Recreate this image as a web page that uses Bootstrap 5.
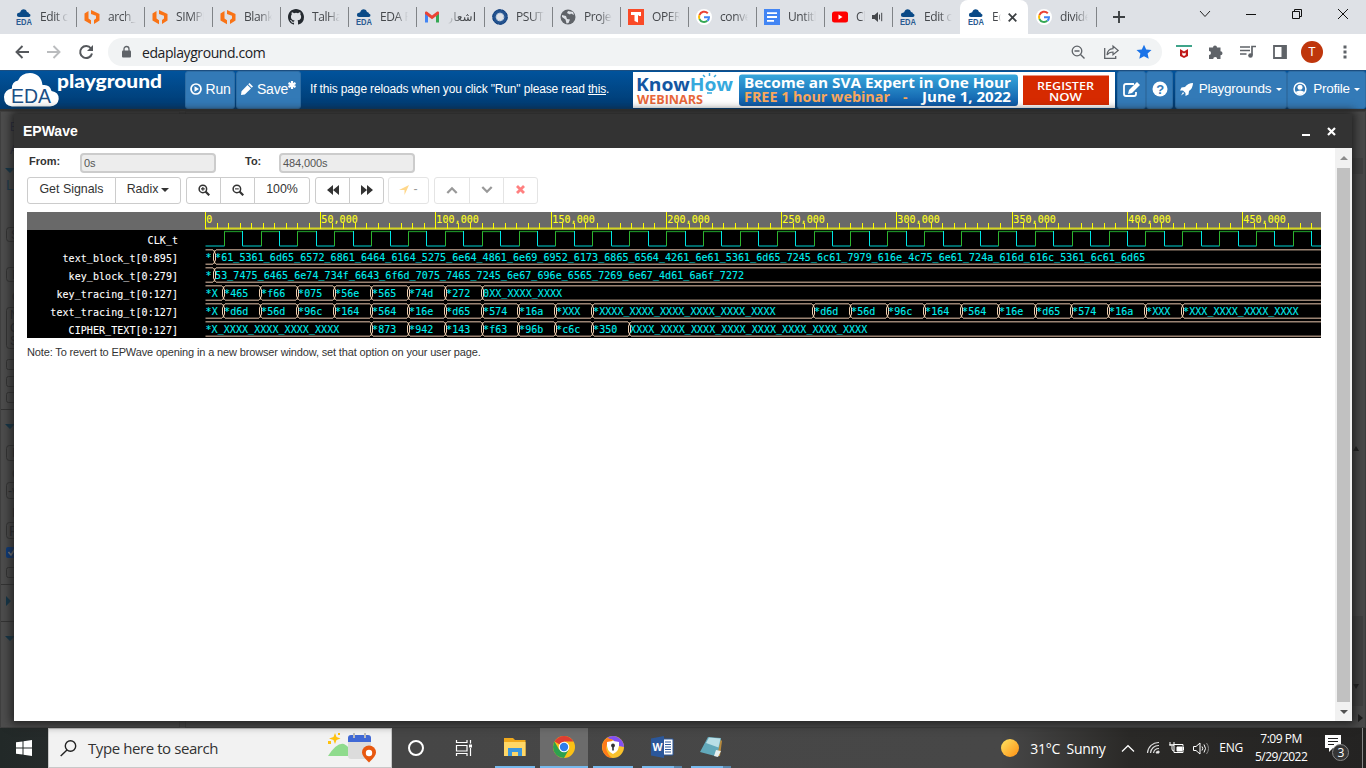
<!DOCTYPE html>
<html lang="en">
<head>
<meta charset="utf-8">
<title>Edit code - EDA Playground</title>
<link href="https://cdn.jsdelivr.net/npm/bootstrap@5.3.0/dist/css/bootstrap.min.css" rel="stylesheet">
<style>
html,body{height:100%;overflow:hidden}
body{font-family:"Liberation Sans",Arial,sans-serif;font-size:14px;background:#4a4a4a;color:#333}
svg{display:block;flex:none;overflow:visible}
.seg{font-family:"Open Sans","Noto Sans",sans-serif}
/* browser chrome */
.tabstrip{height:34px;background:#dee1e6;padding-left:8px}
.btab{width:68px;height:34px;padding:0 8px;font-size:12px;letter-spacing:-.4px;color:#45484c;position:relative;flex:none}
.btab .ttl{margin-left:8px;width:29px;overflow:hidden;white-space:nowrap;-webkit-mask-image:linear-gradient(90deg,#000 55%,transparent)}
.btab.sep::after{content:"";position:absolute;right:-1px;top:7px;height:20px;width:1px;background:#808387}
.btab.on{background:#fff;border-radius:8px 8px 0 0}
.btab .ttl.short{width:9px}
.addr{height:36px;background:#fff}
.omni{width:1054px;height:28px;background:#f1f3f4;border-radius:14px;padding:0 11px 0 14px;margin-left:15px}
.avatar{width:22px;height:22px;background:#bf360c;color:#fff;font-size:12px}
/* site header */
.sitebar{height:39px;background:linear-gradient(#01539c,#003a70);border-top:1px solid #1c4e80}
.sitebar .btn{background:#337ab7;border:1px solid #2e6da4;color:#fff;border-radius:3px;height:38px;padding:0 0 2px;font-size:14px;line-height:1;letter-spacing:-.25px}
.sitebar .note{font-size:12px;color:#fff;letter-spacing:-.15px}
.caret{display:inline-block;border:4px solid transparent;border-top-color:currentColor;border-bottom:0}
.caret.sm3{border-width:3px 3px 0}
/* dimmed page */
.stage{height:619px;background:#474747;border-top:2px solid #353433;position:relative}
.side{width:180px;height:617px;background:#4d4d4d;border:1px solid #404040}
.main{height:617px;background:#494949;border:1px solid #3d3d3d;margin-left:5px}
/* viewer window */
.viewer{position:absolute;left:14px;top:3px;width:1338px;height:607px;background:#fff;box-shadow:0 0 9px 3px #222}
.viewer .cap{height:34px;background:#333;color:#fff;font-weight:bold;font-size:14px;padding:0 16px 0 9px}
.viewer .content{width:1321px;padding:5px 0 0 13px}
.scrollcol{width:17px;height:573px;background:#f1f1f1}
.thumb{width:13px;background:#c1c1c1;height:534px}
.fld{font-size:11px;font-weight:bold;height:19px;line-height:17px}
.ro{width:136px;height:20px;border:2px solid #ccc;background:#ededed;border-radius:4px;font-size:11px;line-height:17px;padding-left:2px;color:#555;letter-spacing:-.1px}
.tools{margin-top:4px}
.tools .btn{height:27px;border:1px solid #ccc;background:#fff;color:#333;font-size:12.400px;padding:0 0 2px;border-radius:3px;line-height:1}
.tools .btn-group>.btn:not(:last-child){border-top-right-radius:0;border-bottom-right-radius:0}
.tools .btn-group>.btn:not(:first-child){border-top-left-radius:0;border-bottom-left-radius:0}
.tools .off{border-color:#e4e4e4;color:#999}
.wavebox{margin-top:8px;width:1294px;height:126px;background:#000}
.foot-note{font-size:11px;letter-spacing:-.145px;margin-top:6px;line-height:16px}
/* taskbar */
.taskbar{height:40px;background:linear-gradient(90deg,#222928 0,#252a2a 48px,#464646 392px,#474747 1000px,#2a2927 1130px,#242322)}
.search{width:344px;height:40px;background:#f2f2f2;border:1px solid #c8c8c8;font-size:15px;color:#333;letter-spacing:-.42px}
.task{width:40px;height:40px;border-bottom:2px solid #76b9ed}
.task.cur{width:48px;background:#6c6c6c}
.tray{color:#fff;white-space:nowrap}
</style>
</head>
<body>
<svg width="0" height="0" class="position-absolute">
 <defs>
  <symbol id="eda" viewBox="0 0 16 16"><path d="M3 8a2 2 0 0 1 0-4.200Q3.500 3.200 4.200 3.200Q5 .2 7.800 .2Q10.600 .3 11 2.900Q13 3 12.900 4.500Q15 5 14.400 7Q14 8 12.500 8Z" fill="#0a4a87"/><text x="0" y="15.800" font-family="Liberation Sans" font-weight="bold" font-size="8.500" textLength="16" lengthAdjust="spacingAndGlyphs" letter-spacing="0" fill="#2a5b91">EDA</text></symbol>
  <symbol id="lt" viewBox="0 0 16 16"><path d="M.5 4.500L4.500 2v7.500L7 11.300V15.300L.5 11.500ZM7 1l8.500 4v6.500L10 15v-4l2-1.500V6.700L7 5Z" fill="#f97316"/></symbol>
  <symbol id="gg" viewBox="0 0 16 16"><circle cx="8" cy="8" r="8" fill="#fff"/><path d="M11.800 4.200A5 5 0 0 0 3.500 6" fill="none" stroke="#ea4335" stroke-width="2"/><path d="M3.500 6a5 5 0 0 0 0 4.200" fill="none" stroke="#fbbc05" stroke-width="2"/><path d="M3.500 10.100A5 5 0 0 0 11.300 11.800" fill="none" stroke="#34a853" stroke-width="2"/><path d="M8 8.200h5a5 5 0 0 1-1.600 3.600" fill="none" stroke="#4285f4" stroke-width="2"/></symbol>
  <symbol id="mag" viewBox="0 0 16 16"><circle cx="6.500" cy="6.500" r="5" fill="none" stroke="currentColor" stroke-width="2"/><path d="M10 10l5 5" stroke="currentColor" stroke-width="3"/></symbol>
 </defs>
</svg>

<div class="tabstrip d-flex align-items-center seg">
 <div class="btab sep d-flex align-items-center"><svg width="16" height="16"><use href="#eda"/></svg><span class="ttl">Edit co</span></div>
 <div class="btab sep d-flex align-items-center"><svg width="16" height="16"><use href="#lt"/></svg><span class="ttl">arch_p</span></div>
 <div class="btab sep d-flex align-items-center"><svg width="16" height="16"><use href="#lt"/></svg><span class="ttl">SIMPL</span></div>
 <div class="btab sep d-flex align-items-center"><svg width="16" height="16"><use href="#lt"/></svg><span class="ttl">Blank</span></div>
 <div class="btab sep d-flex align-items-center"><svg width="16" height="16" viewBox="0 0 16 16"><path fill="#24292f" d="M8 0C3.580 0 0 3.580 0 8c0 3.540 2.290 6.530 5.470 7.590.4.070.55-.17.55-.38v-1.490c-2.010.37-2.530-.49-2.690-.94-.09-.23-.48-.94-.82-1.130-.28-.15-.68-.52-.01-.53.63-.01 1.080.58 1.230.82.72 1.210 1.870.87 2.330.66.07-.52.28-.87.51-1.070-1.780-.2-3.640-.89-3.640-3.950 0-.87.31-1.590.82-2.150-.08-.2-.36-1.020.08-2.120 0 0 .67-.21 2.200.82a7.600 7.600 0 0 1 4 0c1.530-1.040 2.200-.82 2.200-.82.44 1.100.16 1.920.08 2.120.51.56.82 1.270.82 2.150 0 3.070-1.870 3.750-3.650 3.950.29.25.54.73.54 1.480v2.200c0 .21.15.46.55.38A8 8 0 0 0 16 8c0-4.420-3.580-8-8-8"/></svg><span class="ttl">TalHas</span></div>
 <div class="btab sep d-flex align-items-center"><svg width="16" height="16"><use href="#eda"/></svg><span class="ttl">EDA P</span></div>
 <div class="btab sep d-flex align-items-center"><svg width="16" height="16" viewBox="0 0 16 16"><path d="M1 4v9.500h3V7Z" fill="#4285f4"/><path d="M15 4v9.500h-3V7Z" fill="#34a853"/><path d="M1 3.500Q1 2 2.800 2.500L8 6.500l5.200-4Q15 2 15 3.500V5L8 10.200 1 5Z" fill="#ea4335"/></svg><span class="ttl" dir="rtl" style="-webkit-mask-image:linear-gradient(270deg,#000 55%,transparent);font-family:'DejaVu Sans'">اشعار</span></div>
 <div class="btab sep d-flex align-items-center"><svg width="16" height="16" viewBox="0 0 16 16"><circle cx="8" cy="8" r="6" fill="none" stroke="#24538f" stroke-width="3.500"/><circle cx="8" cy="8" r="7.200" fill="none" stroke="#123f7b" stroke-dasharray="3 1.500"/><circle cx="8" cy="8" r="3.800" fill="none" stroke="#86a9cf" stroke-dasharray="1 1"/></svg><span class="ttl">PSUT</span></div>
 <div class="btab sep d-flex align-items-center"><svg width="16" height="16" viewBox="0 0 16 16"><circle cx="8" cy="8" r="7.500" fill="#5f6368"/><path d="M2 6l4 1 1 3 3 .5-1.500 3.500-2 .5-1-4L2 8ZM8 2l-1 2 3 1.500 1-1 3 1.500-1-3Z" fill="#dee1e6"/></svg><span class="ttl">Projec</span></div>
 <div class="btab sep d-flex align-items-center"><svg width="16" height="16" viewBox="0 0 16 16"><path d="M0 0h16v16H0Z" fill="#fa4a27"/><path d="M3 3h10v4h-2v-1l-1 .7V13.500L6.500 12V6H3Z" fill="#fff"/></svg><span class="ttl">OPERA</span></div>
 <div class="btab sep d-flex align-items-center"><svg width="16" height="16"><use href="#gg"/></svg><span class="ttl">conver</span></div>
 <div class="btab sep d-flex align-items-center"><svg width="16" height="16" viewBox="0 0 16 16"><path d="M0 0h16v16H0Z" fill="#4285f4"/><path d="M3 4.200h10M3 8h10M3 11.800h7" stroke="#fff" stroke-width="1.800"/></svg><span class="ttl">Untitle</span></div>
 <div class="btab sep d-flex align-items-center"><svg width="16" height="16" viewBox="0 0 16 16"><rect y="2.500" width="16" height="11" rx="2.500" fill="#f00"/><path d="M6.500 5.500l4 2.500-4 2.500Z" fill="#fff"/></svg><span class="ttl short">Ch</span><svg style="margin-left:7px" width="12" height="12" viewBox="0 0 12 12"><path d="M0 4h2.500L6 1v10L2.500 8H0Z" fill="#45484c"/><path d="M7.500 3.500v5M9.700 1.800v8.400" stroke="#45484c"/></svg></div>
 <div class="btab d-flex align-items-center"><svg width="16" height="16"><use href="#eda"/></svg><span class="ttl">Edit co</span></div>
 <div class="btab on d-flex align-items-center"><svg width="16" height="16"><use href="#eda"/></svg><span class="ttl short">Ed</span><svg style="margin-left:7px" width="9" height="9"><path d="M.7 .7l7.600 7.600M8.300 .7L.7 8.300" stroke="#3c4043" stroke-width="1.800"/></svg></div>
 <div class="btab sep d-flex align-items-center"><svg width="16" height="16"><use href="#gg"/></svg><span class="ttl">divide</span></div>
 <svg style="margin-left:17px" width="12" height="12"><path d="M6 0v12M0 6h12" stroke="#3c4043" stroke-width="1.900"/></svg>
 <svg style="margin-left:75px;margin-top:-6px" width="10" height="6"><path d="M0 0l5 5.500L10 0" fill="none" stroke="#222"/></svg>
 <svg style="margin-left:36px;margin-top:-5px" width="10" height="1"><path d="M0 .5h10" stroke="#111"/></svg>
 <svg style="margin-left:36px;margin-top:-6px" width="10" height="10"><path d="M.5 2.500h7v7h-7ZM2.500 2.500v-2h7v7h-2" fill="none" stroke="#111"/></svg>
 <svg style="margin-left:36px;margin-top:-6px" width="10" height="10"><path d="M0 0l10 10M10 0L0 10" stroke="#111"/></svg>
</div>

<div class="addr d-flex align-items-center">
 <svg style="margin-left:15px" width="14" height="14"><path d="M14 7H1.500M7.500 1L1.500 7l6 6" fill="none" stroke="#55585c" stroke-width="1.900"/></svg>
 <svg style="margin-left:18px" width="14" height="14"><path d="M0 7h12.500M6.500 1l6 6-6 6" fill="none" stroke="#babcbe" stroke-width="1.900"/></svg>
 <svg style="margin-left:18px" width="14" height="14"><path d="M12 3.500A6 6 0 1 0 13 8.500" fill="none" stroke="#55585c" stroke-width="2"/><path d="M14 0v6H8Z" fill="#55585c"/></svg>
 <div class="omni d-flex align-items-center">
  <svg width="9" height="12"><rect y="4.500" width="9" height="7" rx="1" fill="#5f6368"/><path d="M2 5V3a2.500 2.500 0 0 1 5 0v2" fill="none" stroke="#5f6368" stroke-width="1.300"/></svg>
  <span class="seg" style="font-size:14px;margin-left:11px;color:#202124;letter-spacing:-.42px">edaplayground.com</span>
  <svg class="ms-auto" width="15" height="15" viewBox="0 0 15 15"><circle cx="6" cy="6" r="4.800" fill="none" stroke="#5f6368" stroke-width="1.300"/><path d="M9.500 9.500l4 4M3.500 6h5" stroke="#5f6368" stroke-width="1.400"/></svg>
  <svg style="margin-left:18px" width="15" height="14" viewBox="0 0 15 14"><path d="M.7 3v10.300h11V11" fill="none" stroke="#5f6368" stroke-width="1.300"/><path d="M3 10Q3.500 4 9 3.700V1l5.200 4.500L9 9.800V7Q5 7 3 10Z" fill="none" stroke="#5f6368" stroke-width="1.200"/></svg>
  <svg style="margin-left:17px;margin-right:-1px" width="16" height="16" viewBox="0 0 16 16"><path d="M8 .7l2.200 4.800 5.300.6-3.900 3.500 1.100 5.200L8 12.200l-4.700 2.600 1.100-5.200L.5 6.100l5.300-.6Z" fill="#1a73e8"/></svg>
 </div>
 <svg style="margin-left:14px;margin-top:-2px" width="16" height="13" viewBox="0 0 16 13"><path d="M0 0h16v2H0Z" fill="#3fa48a"/><path d="M4 4v7l4 2 4-2V4L8 6.500ZM6.300 7.500L8 8.500l1.700-1V10L8 11l-1.700-1Z" fill="#c01818" fill-rule="evenodd"/></svg>
 <svg style="margin-left:16px" width="16" height="16" viewBox="0 0 16 16"><path d="M1 3.500h4a2 2 0 1 1 4 0h3.500v3.700a2 2 0 1 1 0 4V15H9.200a2 2 0 1 0-4 0H1V11a2 2 0 1 0 0-4Z" fill="#5f6368"/></svg>
 <svg style="margin-left:16px" width="16" height="14" viewBox="0 0 16 14"><path d="M0 2h10M0 5.500h10M0 9h6.500M12 10V1.500h4" stroke="#5f6368" stroke-width="1.700" fill="none"/><circle cx="10.500" cy="10.500" r="2.300" fill="#5f6368"/></svg>
 <svg style="margin-left:17px" width="14" height="14"><path d="M1 1h12v12H1Z" fill="#fff" stroke="#5f6368" stroke-width="1.800"/><path d="M8.500 1H13v12H8.500Z" fill="#5f6368"/></svg>
 <div class="avatar rounded-circle d-flex align-items-center justify-content-center" style="margin-left:14px">T</div>
 <svg style="margin-left:20px" width="4" height="14"><path d="M.5 .5h3v3h-3ZM.5 5.500h3v3h-3ZM.5 10.500h3v3h-3Z" fill="#5f6368"/></svg>
</div>

<nav class="sitebar d-flex align-items-start">
 <svg width="185" height="38" viewBox="0 0 185 38"><path d="M12 35.500Q4 34.500 4 26Q4.500 18.500 12 17.500Q11.500 11 18 9.500Q21 2 30 2Q41 2.500 42.500 14Q50 13 51.500 20Q59 21 58.700 28Q58 35 50 35.500Z" fill="#fff"/><text x="11" y="32" font-size="21" textLength="40" lengthAdjust="spacingAndGlyphs" fill="#1b4f86">EDA</text><text x="57" y="16.500" font-family="Lato" font-weight="900" font-size="19" textLength="105" lengthAdjust="spacingAndGlyphs" fill="#fff">playground</text></svg>
 <button class="btn d-flex align-items-center justify-content-center gap-1" style="width:50px"><svg width="12" height="12" viewBox="0 0 12 12"><circle cx="6" cy="6" r="5" fill="none" stroke="#fff" stroke-width="1.700"/><path d="M4.500 3.300L9 6 4.500 8.700Z" fill="#fff"/></svg>Run</button>
 <button class="btn d-flex align-items-center justify-content-center" style="width:65px;margin-left:1px"><svg width="12" height="12" viewBox="0 0 12 12" style="margin-right:4px"><path d="M8.500 0L12 3.500 10.700 4.800 7.200 1.300ZM6.500 2L10 5.500 3.800 11.500 0 12 .5 8.200Z" fill="#fff"/></svg>Save<svg width="8" height="8" style="margin-top:-8px"><path d="M4 0v8M.5 2l7 4M.5 6l7-4" stroke="#fff" stroke-width="2.200"/></svg></button>
 <span class="note align-self-center" style="width:322px;margin-left:9px;margin-top:-2px">If this page reloads when you click "Run" please read <u>this</u>.</span>
 <svg width="482" height="36" viewBox="0 0 482 36" style="margin:1px 2px 0 1px" font-family="Open Sans" font-weight="bold">
  <defs><linearGradient id="ban" x2="0" y2="1"><stop stop-color="#37a7dc"/><stop offset="1" stop-color="#0c58a6"/></linearGradient></defs>
  <path d="M0 0h482v36H0Z" fill="#fff"/>
  <text x="3" y="18.500" font-size="18" textLength="97" lengthAdjust="spacingAndGlyphs" fill="#1457a2">Know<tspan fill="#36a9dd">How</tspan></text><path d="M76.500 1v3M70 3l2 2M83 3l-2 2M74 21h5" stroke="#36a9dd" stroke-width="1.500"/>
  <text x="4" y="31.500" font-size="12" textLength="66" lengthAdjust="spacingAndGlyphs" fill="#e8673a">WEBINARS</text>
  <rect x="106" y="2.500" width="279" height="31.500" rx="3" fill="url(#ban)"/>
  <text x="111" y="15.500" font-size="15" textLength="267" lengthAdjust="spacingAndGlyphs" fill="#fff">Become an SVA Expert in One Hour</text>
  <text x="111" y="29.800" font-size="14" textLength="146" lengthAdjust="spacingAndGlyphs" fill="#f9a75c">FREE 1 hour webinar</text><text x="270" y="29.500" font-size="14" fill="#f9a75c">-</text>
  <text x="289" y="29.800" font-size="14" textLength="89" lengthAdjust="spacingAndGlyphs" fill="#fff">June 1, 2022</text>
  <path d="M390 3.500h86v29.500h-86Z" fill="#d62a00"/>
  <text x="404" y="17.500" font-size="11.500" textLength="57" lengthAdjust="spacingAndGlyphs" fill="#fff" font-weight="600">REGISTER</text><text x="416" y="28.500" font-size="11.500" textLength="33" lengthAdjust="spacingAndGlyphs" fill="#fff" font-weight="600">NOW</text>
 </svg>
 <button class="btn d-flex align-items-center justify-content-center" style="width:29px"><svg width="17" height="15" viewBox="0 0 17 15"><path d="M11 2H3Q1 2 1 4v8q0 2 2 2h8q2 0 2-2v-2" fill="none" stroke="#fff" stroke-width="1.800"/><path d="M14 0l3 3-8 8-4 1 1-4Z" fill="#fff"/></svg></button>
 <button class="btn d-flex align-items-center justify-content-center" style="width:27px"><svg width="16" height="16"><circle cx="8" cy="8" r="7.500" fill="#fff"/><text x="4.200" y="13" font-weight="bold" font-size="13" fill="#337ab7">?</text></svg></button>
 <button class="btn d-flex align-items-center justify-content-center" style="width:112px;margin-left:2px"><svg width="13" height="13" viewBox="0 0 13 13" style="margin-right:6px"><path d="M13 0Q8 0 5 4L1.500 4.500 0 7.500 3 7.500 5.500 10V13L8.500 11.500 9 8Q13 5 13 0ZM3 9l1.200 1.200L1 12.500Z" fill="#fff"/></svg><span style="font-size:13.500px;padding-right:1px">Playgrounds</span><i class="caret sm3 ms-1"></i></button>
 <button class="btn d-flex align-items-center justify-content-center" style="width:79px"><svg width="14" height="14" style="margin-right:6px"><circle cx="7" cy="7" r="5.900" fill="none" stroke="#fff" stroke-width="1.500"/><circle cx="7" cy="5.300" r="2.500" fill="#fff"/><path d="M2.500 10q4.500-3 9 0-4.500 5-9 0Z" fill="#fff"/></svg><span style="font-size:13.500px">Profile</span><i class="caret sm3 ms-1"></i></button>
</nav>

<section class="stage d-flex">
 <div class="side">
  <svg width="60" height="610" viewBox="1 112 60 610" font-size="12" fill="#25282d">
   <text x="10" y="131" fill="#262a42">E</text><text x="10" y="154" fill="#262a42">A</text><path d="M5 168h10l-5 5ZM5 424h10l-5 5ZM5 636h10l-5 5ZM6 596v10l5-5Z" fill="#12364a"/><text x="6" y="190" font-size="14" fill="#1b3b50">L</text>
   <path d="M1 409.500h13M1 584.500h13M1 621.500h13" stroke="#333"/>
   <g fill="none" stroke="#333"><rect x="6.500" y="227.500" width="30" height="14" rx="3"/><rect x="6.500" y="267.500" width="30" height="14" rx="3"/><rect x="6.500" y="307.500" width="30" height="41" rx="3"/><rect x="6.500" y="359.500" width="10" height="10" rx="2"/><rect x="6.500" y="376.500" width="10" height="10" rx="2"/><rect x="6.500" y="392.500" width="10" height="10" rx="2"/><rect x="6.500" y="445.500" width="30" height="15" rx="3"/><rect x="6.500" y="482.500" width="30" height="16" rx="3"/><rect x="6.500" y="522.500" width="30" height="16" rx="3"/><rect x="6.500" y="567.500" width="10" height="10" rx="2"/></g>
   <text x="11" y="239">S</text><text x="12" y="279">N</text><text x="12" y="301">O</text><text x="10" y="319">N</text><text x="10" y="332">C</text><text x="10" y="345">S</text><text x="12" y="457">I</text><text x="12" y="478">C</text><text x="8" y="495">-v</text><text x="12" y="517">I</text><text x="9" y="536" font-size="14">R</text>
   <rect x="6" y="547" width="11" height="11" rx="2" fill="#0a3b80"/><path d="M8.500 552l2.500 3 4-6" stroke="#888" stroke-width="1.500" fill="none"/>
  </svg>
 </div>
 <div class="main flex-grow-1 d-flex flex-column justify-content-end align-items-end"><svg width="20" height="616"><path d="M5 47h13v16H5ZM5 505h13v90H5Z" fill="#414141"/><path d="M8 340h6l-3-5ZM8 573h6l-3 5ZM13 603v8l5-4Z" fill="#1b1b1b"/></svg></div>

 <div class="viewer">
  <div class="cap d-flex align-items-center justify-content-between"><span>EPWave</span>
   <span class="d-flex align-items-center"><svg width="8" height="9"><path d="M0 8h8" stroke="#fff" stroke-width="2"/></svg><svg style="margin-left:17px" width="9" height="9"><path d="M1 1l7 7M8 1L1 8" stroke="#fff" stroke-width="2.200"/></svg></span></div>
  <div class="d-flex">
   <div class="content">
    <div class="d-flex">
     <span class="fld" style="width:53px;padding-left:2px">From:</span><div class="ro">0s</div>
     <span class="fld" style="width:63px;padding-left:29px">To:</span><div class="ro">484,000s</div>
    </div>
    <div class="tools d-flex">
     <div class="btn-group"><button class="btn" style="width:89px">Get Signals</button><button class="btn" style="width:66px">Radix<i class="caret align-middle" style="margin-left:3px"></i></button></div>
     <div class="btn-group" style="margin-left:5px"><button class="btn d-flex align-items-center justify-content-center" style="width:35px"><svg width="12" height="12" viewBox="0 0 16 16"><use href="#mag"/><path d="M6.500 4v5M4 6.500h5" stroke="#333" stroke-width="1.500"/></svg></button><button class="btn d-flex align-items-center justify-content-center" style="width:35px"><svg width="12" height="12" viewBox="0 0 16 16"><use href="#mag"/><path d="M4 6.500h5" stroke="#333" stroke-width="1.500"/></svg></button><button class="btn" style="width:56px">100%</button></div>
     <div class="btn-group" style="margin-left:5px"><button class="btn d-flex align-items-center justify-content-center" style="width:35px"><svg width="12" height="10"><path d="M6 0v10L0 5ZM12 0v10L6 5Z" fill="#333"/></svg></button><button class="btn d-flex align-items-center justify-content-center" style="width:35px"><svg width="12" height="10"><path d="M0 0v10l6-5ZM6 0v10l6-5Z" fill="#333"/></svg></button></div>
     <button class="btn off d-flex align-items-center justify-content-center gap-1" style="width:41px;margin-left:4px"><svg width="10" height="10"><path d="M10 0L5.500 10V5H0Z" fill="#ffd78a"/></svg>-</button>
     <div class="btn-group" style="margin-left:5px"><button class="btn off d-flex align-items-center justify-content-center" style="width:36px"><svg width="12" height="8"><path d="M1.300 7L6 2.300 10.700 7" fill="none" stroke="#999" stroke-width="2.300"/></svg></button><button class="btn off d-flex align-items-center justify-content-center" style="width:35px"><svg width="12" height="8"><path d="M1.300 1L6 5.700 10.700 1" fill="none" stroke="#999" stroke-width="2.300"/></svg></button><button class="btn off d-flex align-items-center justify-content-center" style="width:35px"><svg width="9" height="9"><path d="M1 1l7 7M8 1L1 8" stroke="#ff8080" stroke-width="2.800"/></svg></button></div>
    </div>
    <div class="wavebox"><svg id="wave" width="1294" height="126" viewBox="27 212 1294 126" style="overflow:hidden" font-family="DejaVu Sans Mono, monospace" font-size="10"></svg></div>
    <div class="foot-note">Note: To revert to EPWave opening in a new browser window, set that option on your user page.</div>
   </div>
   <div class="scrollcol d-flex flex-column align-items-center justify-content-between py-1"><svg width="8" height="5" style="margin-top:3px"><path d="M0 5l4-4 4 4Z" fill="#8b8b8b"/></svg><div class="thumb"></div><svg width="8" height="5" style="margin-bottom:2px"><path d="M0 0l4 4 4-4Z" fill="#505050"/></svg></div>
  </div>
 </div>
</section>

<footer class="taskbar d-flex align-items-center seg">
 <svg width="48" height="16"><path d="M16 2.300l6.500-.9v6.100H16ZM23.500 1.200L32 0v7.500h-8.500ZM16 8.500h6.500v6.100L16 13.700ZM23.500 8.500H32V16l-8.500-1.200Z" fill="#fff"/></svg>
 <div class="search d-flex align-items-center">
  <svg width="17" height="17" style="margin-left:11px"><circle cx="10.500" cy="6" r="5.200" fill="none" stroke="#222" stroke-width="1.400"/><path d="M7 10L.7 16" stroke="#222" stroke-width="1.400"/></svg>
  <span style="margin-left:11px">Type here to search</span>
  <svg width="50" height="30" viewBox="0 0 50 30" class="ms-auto" style="margin-right:14px"><path d="M1 23Q10 9 17 11Q24 14 24 23Z" fill="#8fdb8d"/><path d="M8 0l1.500 4 4 1.500-4 1.500L8 11 6.500 7 2 5.500 6.500 4ZM1 8h3v3H1ZM11 0h2v2h-2Z" fill="#ffc20e"/><rect x="21" y="3" width="23" height="23" rx="3" fill="#dcdcdc"/><path d="M21 9V5q0-3 3-3h17q3 0 3 3v4Z" fill="#3f68d5"/><path d="M27 0v5M38 0v5" stroke="#bbb" stroke-width="2"/><path d="M42 29.500Q35 23 35 19.500a7 7 0 0 1 14 0Q49 23 42 29.500Z" fill="#e8580f"/><circle cx="42" cy="20" r="3.200" fill="#fff"/></svg>
 </div>
 <svg width="16" height="16" style="margin-left:16px"><circle cx="8" cy="8" r="7" fill="none" stroke="#fff" stroke-width="2"/></svg>
 <svg width="17" height="16" style="margin-left:32px"><path d="M.5 0v2.500h10.500V0M.5 16v-2.500h10.500V16M.5 5.500h10.500v5.500H.5ZM14.500 0v3.500M14.500 8v8" fill="none" stroke="#fff" stroke-width="1.200"/><path d="M13 4.500h3v3h-3Z" fill="#fff"/></svg>
 <div class="task d-flex align-items-center justify-content-center" style="margin-left:22px"><svg width="22" height="18"><path d="M0 0h9l2 2h10.500v16H0Z" fill="#f0a91c"/><path d="M0 4h21.500v14H0Z" fill="#ffd766"/><path d="M4 18v-8h14v8h-4v-4H8v4Z" fill="#3c97dd"/></svg></div>
 <div class="task cur d-flex align-items-center justify-content-center" style="margin-left:5px"><svg width="22" height="22" viewBox="0 0 22 22"><circle cx="11" cy="11" r="11" fill="#fbc116"/><path d="M11 11L1.500 5.500A11 11 0 0 1 20.500 5.500H11Z" fill="#df3d32"/><path d="M1.500 5.500A11 11 0 0 0 11 22l4.700-8.300L11 11 6 13.500Z" fill="#2da04e"/><circle cx="11" cy="11" r="5.300" fill="#fff"/><circle cx="11" cy="11" r="4.200" fill="#2f7de9"/></svg></div>
 <div class="task d-flex align-items-center justify-content-center" style="margin-left:5px"><svg width="22" height="22" viewBox="0 0 22 22"><circle cx="11" cy="11" r="11" fill="#f9c22c"/><path d="M5 2A11 11 0 0 1 22 11L17 10 11 4Z" fill="#8250f4"/><path d="M5 2A11 11 0 0 0 10 22Q2 15 5 8L11 4Z" fill="#ff7a1a"/><path d="M5 6q6-1 6-1.500 0 .5 6 1.500 1 9-6 12Q4 15 5 6Z" fill="#fff"/><circle cx="11" cy="9.500" r="1.900" fill="#333"/><path d="M10.200 10h1.600v4.500h-1.600Z" fill="#333"/></svg></div>
 <div class="task d-flex align-items-center justify-content-center" style="margin-left:9px;border-image:linear-gradient(90deg,#76b9ed 31px,#5886ab 31px) 1"><svg width="22" height="22" viewBox="0 0 22 22"><path d="M10 3h12v16H10Z" fill="#fff" stroke="#2b579a"/><path d="M14 6h6M14 8.500h6M14 11h6M14 13.500h6M14 16h6" stroke="#2b579a"/><path d="M0 2.500L13 0v22L0 19.500Z" fill="#2b579a"/><text x="1.500" y="15" font-size="11" font-weight="bold" fill="#fff" textLength="10" lengthAdjust="spacingAndGlyphs">W</text></svg></div>
 <div class="task d-flex align-items-center justify-content-center" style="margin-left:9px;border-image:linear-gradient(90deg,#76b9ed 31px,#5886ab 31px) 1"><svg width="22" height="22" viewBox="0 0 22 22"><path d="M20 3l2 2-2 15h-4Z" fill="#b88a3d"/><path d="M8 1l13 1-4 18.500L0 16Z" fill="#62a9bb"/><path d="M9 1.500l11.500 1-2 9L6 7Z" fill="#b9dfe7"/><path d="M16 14l5 1-3 6-4-1Z" fill="#e7eeee"/></svg></div>
 <div class="tray d-flex align-items-center ms-auto">
  <svg width="18" height="18"><defs><linearGradient id="sun" x2="1" y2="1"><stop stop-color="#ffe564"/><stop offset="1" stop-color="#ff8f12"/></linearGradient></defs><circle cx="9" cy="9" r="9" fill="url(#sun)"/></svg>
  <span style="font-size:14px;margin-left:11px;letter-spacing:-.3px;width:92px">31°C&nbsp; Sunny</span>
  <svg width="12" height="7"><path d="M0 6.500L6 .7l6 5.800" fill="none" stroke="#fff" stroke-width="1.200"/></svg>
  <svg width="13" height="12" style="margin-left:13px" fill="none" stroke="#ddd"><path d="M.5 11A11 11 0 0 1 12 .5M3.500 11A8 8 0 0 1 12 3.500M6.500 11A5.500 5.500 0 0 1 12 6.500" stroke-width="1.200"/><path d="M9 11q0-2 3-2v2Z" fill="#fff"/></svg>
  <svg width="16" height="12" style="margin-left:9px" fill="none" stroke="#fff"><path d="M5 2.500h9v8H5ZM14.500 5v3M1 0v3h4V0M0 3h5M3 4v3q0 2 2 2"/><path d="M8 5h5v4H8Z" fill="#fff"/></svg>
  <svg width="16" height="13" style="margin-left:8px" fill="none" stroke="#fff"><path d="M.5 4.500h2.500L7 1v11L3 8.500H.5Z"/><path d="M9 4.500q1.500 2 0 4M11 2.500q3 4 0 8"/><path d="M13.500 1q4 5.500 0 11" stroke="#888"/></svg>
  <span style="font-size:12px;margin-left:10px;letter-spacing:-.25px">ENG</span>
  <div class="text-center" style="font-size:12px;line-height:18px;letter-spacing:-.5px;margin-left:12px;width:52px">7:09 PM<br>5/29/2022</div>
  <svg width="25" height="26" style="margin-left:18px;margin-right:18px" viewBox="0 0 25 26"><path d="M0 0h16v13H8l-4 4v-4H0Z" fill="#fff"/><path d="M3 3.500h10M3 6.500h10M3 9.500h6" stroke="#222"/><circle cx="15.500" cy="17.500" r="8" fill="#363636" stroke="#888"/><text x="12.500" y="22" font-size="12" fill="#fff">3</text></svg>
 </div>
 <div style="width:1px;height:40px;background:#888;margin-right:3px;margin-left:-6px"></div>
</footer>

<script src="https://cdn.jsdelivr.net/npm/bootstrap@5.3.0/dist/js/bootstrap.bundle.min.js"></script>
<script>
const X0 = 205.5, END = 1321, PX = 115.22 / 50000, CH = 6.08;
const snap = t => Math.round(X0 + t * PX - .5) + .5;
let out = '<path d="M27 212h1294v18H27Z" fill="#696969"/>';
const line = (d, c, w) => out += `<path d="${d}" stroke="${c}" stroke-width="${w || 1}" fill="none"/>`;
// underscores are lifted so that they stay clear of the bus outline
const lift = s => s.replace(/_([^_]*)/g, '<tspan dy="-1.5">_</tspan><tspan dy="1.5">$1</tspan>');
const label = (x, y, s, c, a) => out += `<text x="${x}" y="${y}" fill="${c}" stroke="${c}" stroke-width=".1" textLength="${(s.length * CH).toFixed(1)}" text-anchor="${a || 'start'}">${lift(s)}</text>`;

// time ruler
line('M205 228.500H1321', '#d4d420', 2);
for (let t = 0; t < 484000; t += 5000) {
  const x = snap(t), big = t % 50000 === 0;
  line(`M${x} ${big ? 212 : 223}V229`, '#ffff00');
  if (big) label(x + .8, 223, t.toLocaleString('en-US'), '#ffff20');
}
// clock
let x = 205.5;
for (let t = 8000, up = true; x < END; t += 8000, up = !up) {
  const n = snap(t + 100);
  line(`M${x} ${up ? 246 : 231.500}H${n}`, up ? '#00a3a3' : '#1b8b25', 1.3);
  if (n < END) line(`M${n} 231V246`, up ? '#2fb52f' : '#00e5e5');
  x = n;
}
label(178, 244, 'CLK_t', '#fff', 'end');

// buses: [start time, shown value]
const run = (from, list) => list.split(' ').map((v, i) => [from + 16000 * i, v]);
const buses = [
  ['text_block_t[0:895]', [[0, '*'], [4000, '*61_5361_6d65_6572_6861_6464_6164_5275_6e64_4861_6e69_6952_6173_6865_6564_4261_6e61_5361_6d65_7245_6c61_7979_616e_4c75_6e61_724a_616d_616c_5361_6c61_6d65']]],
  ['key_block_t[0:279]', [[0, '*'], [4000, '53_7475_6465_6e74_734f_6643_6f6d_7075_7465_7245_6e67_696e_6565_7269_6e67_4d61_6a6f_7272']]],
  ['key_tracing_t[0:127]', [[0, '*X'], ...run(8000, '*465 *f66 *075 *56e *565 *74d *272 0XX_XXXX_XXXX')]],
  ['text_tracing_t[0:127]', [[0, '*X'], ...run(8000, '*d6d *56d *96c *164 *564 *16e *d65 *574 *16a *XXX *XXXX_XXXX_XXXX_XXXX_XXXX_XXXX'), ...run(264000, '*d6d *56d *96c *164 *564 *16e *d65 *574 *16a *XXX *XXX_XXXX_XXXX_XXXX')]],
  ['CIPHER_TEXT[0:127]', [[0, '*X_XXXX_XXXX_XXXX_XXXX'], ...run(72000, '*873 *942 *143 *f63 *96b *c6c *350 XXXX_XXXX_XXXX_XXXX_XXXX_XXXX_XXXX_XXXX')]]
];
buses.forEach(([name, segs], i) => {
  const y = 249 + 18 * i;
  label(178, y + 13, name, '#fff', 'end');
  line(`M205.500 ${y + .7}H1321M205.500 ${y + 15.300}H1321`, '#9a8373', 1.4);
  segs.forEach(([t, v], k) => {
    const sx = snap(t);
    if (k) {
      line(`M${sx} ${y}V${y + 16}`, '#000', 3);
      line(`M${sx - 1} ${y + 1}l2 4v6l-2 4M${sx + 1} ${y + 1}l-2 4v6l2 4`, '#f0d0b0', 1);
    }
    label(sx + (k ? .6 : 0), y + 12, v, '#00f0f0');
  });
});
document.getElementById('wave').innerHTML = out;
</script>
</body>
</html>
